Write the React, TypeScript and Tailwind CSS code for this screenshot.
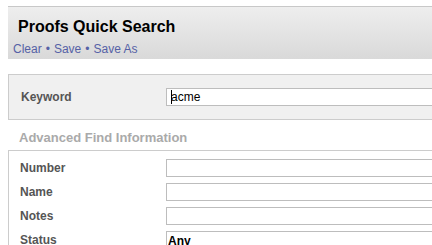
import React from "react";

const fields = ["Number", "Name", "Notes"];

export default function App() {
  return (
    <div className="h-[245px] w-[432px] overflow-hidden bg-white font-['Liberation_Sans',Arial,sans-serif]">
      <div className="ml-[8px] w-[700px] pt-[6px]">
        {/* header */}
        <div className="h-[53px] border-t border-[#c8c8c8] bg-gradient-to-b from-[#eeeeee] to-[#d9d9d9] pl-[10px] pt-[10px]">
          <h1 className="text-[16px] font-bold leading-[20px] text-black">Proofs Quick Search</h1>
          <div className="-ml-[5px] mt-[5px] flex gap-[4px] text-[12px] leading-[14px] text-[#5561a6]">
            <a href="#">Clear</a>
            <span>•</span>
            <a href="#">Save</a>
            <span>•</span>
            <a href="#">Save As</a>
          </div>
        </div>

        {/* keyword */}
        <div className="mt-[15px] flex h-[46px] items-center border border-[#cccccc] bg-[#f0f0f0]">
          <label className="w-[157px] pl-[12px] text-[12px] font-bold text-[#555555]">Keyword</label>
          <div className="flex h-[18px] w-[400px] items-center border border-[#bdbdbd] bg-white pl-[4px] text-[12px] text-black">
            <span className="h-[14px] w-px bg-black" />
            <span className="-ml-px">acme</span>
          </div>
        </div>

        <h2 className="ml-[11px] mb-[4px] mt-[10px] text-[13px] font-bold leading-[16px] text-[#aaaaaa]">
          Advanced Find Information
        </h2>

        {/* advanced fields */}
        <div className="flex flex-col gap-[6px] border-l border-t border-[#cccccc] pt-[8px]">
          {fields.map((f) => (
            <div key={f} className="flex h-[18px] items-center">
              <label className="w-[157px] pl-[11px] text-[12px] font-bold text-[#555555]">{f}</label>
              <input className="h-[18px] w-[400px] border border-[#bdbdbd] bg-white px-[3px] text-[12px] outline-none" />
            </div>
          ))}
          <div className="flex h-[18px] items-center">
            <label className="w-[157px] pl-[11px] text-[12px] font-bold text-[#555555]">Status</label>
            <select className="h-[18px] w-[400px] appearance-none border border-[#bdbdbd] bg-white pl-[1px] text-[12px] font-bold text-black">
              <option>Any</option>
            </select>
          </div>
        </div>
      </div>
    </div>
  );
}
